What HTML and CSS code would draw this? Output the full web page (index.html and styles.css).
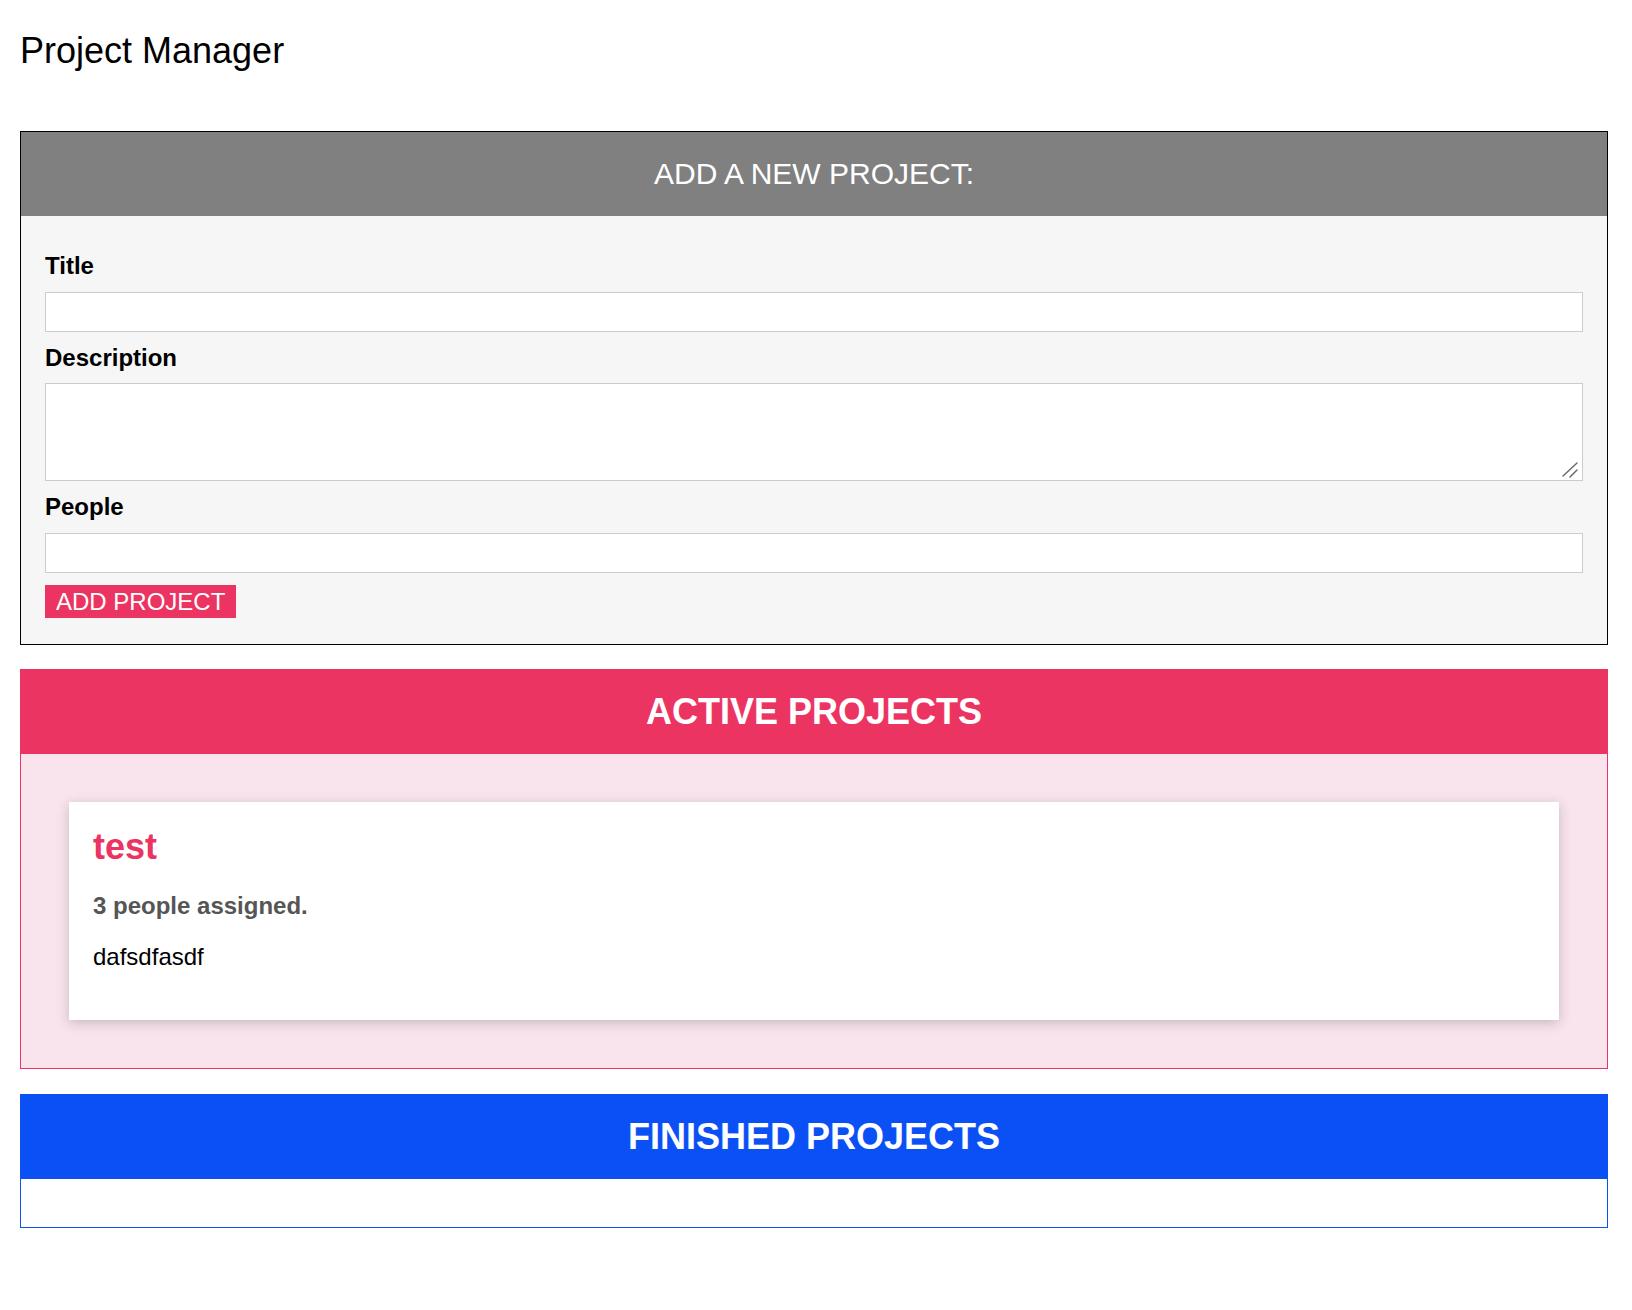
FILE: index.html
```html
<!DOCTYPE html>
<html lang="en">
<head>
<meta charset="utf-8">
<title>Project Manager</title>
<link rel="stylesheet" href="styles.css">
</head>
<body>
<h2 class="app-title">Project Manager</h2>
<div class="app">
  <form class="project-form">
    <header class="form-header">
      <h3 class="form-heading">ADD A NEW PROJECT:</h3>
    </header>
    <div class="form-body">
      <label class="field-label" for="title">Title</label>
      <input class="field-input" type="text" id="title">
      <label class="field-label" for="description">Description</label>
      <div class="textarea-wrap">
        <textarea class="field-textarea" id="description" rows="3"></textarea>
        <svg class="resize-grip" width="18" height="18" viewBox="0 0 18 18" aria-hidden="true">
          <line x1="1" y1="15" x2="15" y2="2" stroke="#666" stroke-width="1.4" stroke-linecap="round"/>
          <line x1="8" y1="16" x2="15" y2="9" stroke="#666" stroke-width="1.4" stroke-linecap="round"/>
        </svg>
      </div>
      <label class="field-label" for="people">People</label>
      <input class="field-input" type="number" id="people">
      <button class="submit-btn" type="submit">ADD PROJECT</button>
    </div>
  </form>

  <section class="projects projects-active">
    <header class="projects-header">
      <h2 class="projects-heading">ACTIVE PROJECTS</h2>
    </header>
    <ul class="projects-list">
      <li class="project-item">
        <h2 class="project-title">test</h2>
        <h3 class="project-people">3 people assigned.</h3>
        <p class="project-desc">dafsdfasdf</p>
      </li>
    </ul>
  </section>

  <section class="projects projects-finished">
    <header class="projects-header">
      <h2 class="projects-heading">FINISHED PROJECTS</h2>
    </header>
    <ul class="projects-list"></ul>
  </section>
</div>
</body>
</html>
```

FILE: styles.css
```css
* {
  box-sizing: border-box;
}

html {
  font-family: "Liberation Sans", Arial, Helvetica, sans-serif;
  font-size: 24px;
}

body {
  margin: 0;
  background: #ffffff;
  color: #000000;
}

.app-title {
  font-size: 36px;
  font-weight: normal;
  line-height: 42px;
  margin: 30px 0 59px 20px;
}

.app {
  margin: 0 24px 0 20px;
  display: flex;
  flex-direction: column;
  gap: 24px;
}

.project-form {
  border: 1px solid #000000;
  background: #f6f6f6;
  margin: 0;
}

.form-header {
  background: #808080;
  height: 84px;
  display: flex;
  align-items: center;
  justify-content: center;
}

.form-heading {
  margin: 0;
  color: #ffffff;
  font-size: 30px;
  font-weight: normal;
}

.form-body {
  padding: 24px 24px 26px;
}

.field-label {
  display: block;
  font-weight: bold;
  margin: 12px 0;
  line-height: 27.6px;
}

.field-input,
.field-textarea {
  display: block;
  width: 100%;
  margin: 12px 0;
  font: inherit;
  padding: 5px 10px;
  border: 1px solid #cccccc;
  background: #ffffff;
  border-radius: 0;
}

.field-input {
  height: 40px;
}

.textarea-wrap {
  position: relative;
  margin: 12px 0;
}

.field-textarea {
  height: 98px;
  margin: 0;
  resize: none;
}

.resize-grip {
  position: absolute;
  right: 3px;
  bottom: 2px;
  pointer-events: none;
}

.submit-btn {
  font: inherit;
  line-height: 27.6px;
  background: #ec3463;
  border: 1px solid #ec3463;
  color: #ffffff;
  padding: 2px 10px;
  margin: 0;
  border-radius: 0;
  cursor: pointer;
}

.projects {
  border: 1px solid #ec3463;
  background: #f9e4ee;
}

.projects-finished {
  border-color: #0b50f5;
  background: #ffffff;
  margin-top: 1px;
}

.projects-header {
  background: #ec3463;
  height: 84px;
  display: flex;
  align-items: center;
  justify-content: center;
}

.projects-finished .projects-header {
  background: #0b50f5;
}

.projects-heading {
  margin: 0;
  color: #ffffff;
  font-size: 36px;
  font-weight: bold;
}

.projects-list {
  list-style: none;
  margin: 0;
  padding: 24px;
}

.project-item {
  background: #ffffff;
  box-shadow: 0 3px 12px rgba(0, 0, 0, 0.2);
  padding: 24px 24px 25px;
  margin: 24px;
}

.project-title {
  margin: 0;
  color: #ec3463;
  font-size: 36px;
  font-weight: bold;
  line-height: 41.4px;
}

.project-people {
  margin: 24px 0;
  color: #555555;
  font-size: 24px;
  font-weight: bold;
  line-height: 27.6px;
}

.project-desc {
  margin: 24px 0;
  line-height: 27.6px;
}
```
